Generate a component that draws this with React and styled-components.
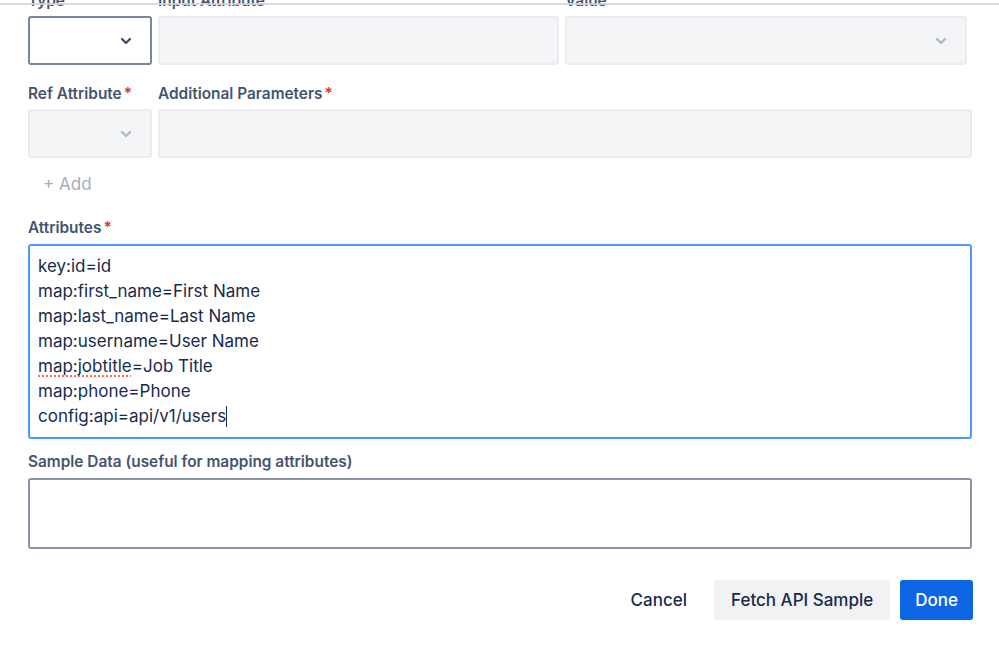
import React from 'react';
import styled, { createGlobalStyle } from 'styled-components';

const GlobalStyle = createGlobalStyle`
  html, body {
    margin: 0;
    padding: 0;
    background: #ffffff;
    overflow: hidden;
  }
  body {
    font-family: Inter, "Noto Sans", "Liberation Sans", sans-serif;
    color: #172b4d;
  }
`;

const Page = styled.div`
  position: relative;
  width: 999px;
  height: 647px;
  overflow: hidden;
`;

const TopEdge = styled.div`
  position: absolute;
  top: 3px;
  left: 0;
  right: 0;
  height: 2px;
  background: rgba(210, 213, 220, 0.85);
  z-index: 2;
`;

const Form = styled.div`
  display: flex;
  flex-direction: column;
  margin-top: -7px;
  padding: 0 27px 0 28px;
`;

const Row = styled.div`
  display: grid;
  grid-template-columns: ${(p) => p.$cols};
  column-gap: 6px;
  margin-bottom: ${(p) => p.$after || 0}px;
`;

const Field = styled.div`
  display: flex;
  flex-direction: column;
  gap: 7px;
  min-width: 0;
`;

const Label = styled.div`
  font-size: 15.4px;
  line-height: 16px;
  font-weight: 600;
  color: #44546f;
  white-space: nowrap;
  display: flex;
  gap: 2px;
`;

const Required = styled.span`
  color: #de350b;
`;

const Box = styled.div`
  box-sizing: border-box;
  height: 49px;
  border-radius: 3px;
  border: 2px solid ${(p) => (p.$active ? '#7a869a' : '#ebecf0')};
  background: ${(p) => (p.$active ? '#ffffff' : '#f4f5f7')};
  display: flex;
  align-items: center;
  justify-content: flex-end;
  padding-right: 18px;
`;

const AddButton = styled.button`
  align-self: flex-start;
  border: 0;
  background: transparent;
  font-family: inherit;
  font-size: 17px;
  line-height: 28px;
  color: #a5adba;
  padding: 0 0 0 15px;
  margin: 12px 0 22px;
`;

const FieldBlock = styled.div`
  display: flex;
  flex-direction: column;
  gap: 8px;
  margin-bottom: ${(p) => p.$after || 0}px;
`;

const Editor = styled.div`
  box-sizing: border-box;
  height: ${(p) => p.$h}px;
  border: 2px solid ${(p) => (p.$focused ? '#4c9aff' : '#8993a4')};
  border-radius: 3px;
  padding: 8px 8px;
  font-size: 17px;
  line-height: 25px;
  color: #172b4d;
  background: #ffffff;
`;

const Line = styled.div`
  white-space: pre;
`;

const Misspelled = styled.span`
  text-decoration: underline dotted #ff5630;
  text-underline-offset: 4px;
`;

const Caret = styled.span`
  display: inline-block;
  width: 1px;
  height: 21px;
  background: #172b4d;
  vertical-align: -5px;
`;

const Footer = styled.div`
  display: flex;
  justify-content: flex-end;
  gap: 10px;
  margin-right: -1px;
`;

const Button = styled.button`
  height: 40px;
  border: 0;
  border-radius: 3px;
  padding: 0 ${(p) => (p.$primary ? 15 : 17)}px;
  font-family: inherit;
  font-size: 17px;
  font-weight: 500;
  color: ${(p) => (p.$primary ? '#ffffff' : '#172b4d')};
  background: ${(p) =>
    p.$primary ? '#0c66e4' : p.$subtle ? 'transparent' : '#f1f2f4'};
`;

function Chevron({ color }) {
  return (
    <svg width="12" height="8" viewBox="0 0 12 8">
      <path
        d="M2 2 L6 6 L10 2"
        fill="none"
        stroke={color}
        strokeWidth="2.4"
        strokeLinecap="round"
        strokeLinejoin="round"
      />
    </svg>
  );
}

const lines = [
  'key:id=id',
  'map:first_name=First Name',
  'map:last_name=Last Name',
  'map:username=User Name',
];

export default function App() {
  return (
    <Page>
      <GlobalStyle />
      <TopEdge />
      <Form>
        <Row $cols="124px 401px 402px" $after={21}>
          <Field>
            <Label>Type</Label>
            <Box $active>
              <Chevron color="#42526e" />
            </Box>
          </Field>
          <Field>
            <Label>Input Attribute</Label>
            <Box />
          </Field>
          <Field>
            <Label>Value</Label>
            <Box>
              <Chevron color="#b3b9c4" />
            </Box>
          </Field>
        </Row>

        <Row $cols="124px 1fr">
          <Field>
            <Label>
              Ref Attribute<Required>*</Required>
            </Label>
            <Box>
              <Chevron color="#b3b9c4" />
            </Box>
          </Field>
          <Field>
            <Label>
              Additional Parameters<Required>*</Required>
            </Label>
            <Box />
          </Field>
        </Row>

        <AddButton>+ Add</AddButton>

        <FieldBlock $after={15}>
          <Label>
            Attributes<Required>*</Required>
          </Label>
          <Editor $focused $h={195}>
            {lines.map((l) => (
              <Line key={l}>{l}</Line>
            ))}
            <Line>
              <Misspelled>map:jobtitle</Misspelled>=Job Title
            </Line>
            <Line>map:phone=Phone</Line>
            <Line>
              config:api=api/v1/users
              <Caret />
            </Line>
          </Editor>
        </FieldBlock>

        <FieldBlock $after={31}>
          <Label>Sample Data (useful for mapping attributes)</Label>
          <Editor $h={71} />
        </FieldBlock>

        <Footer>
          <Button $subtle>Cancel</Button>
          <Button>Fetch API Sample</Button>
          <Button $primary>Done</Button>
        </Footer>
      </Form>
    </Page>
  );
}
